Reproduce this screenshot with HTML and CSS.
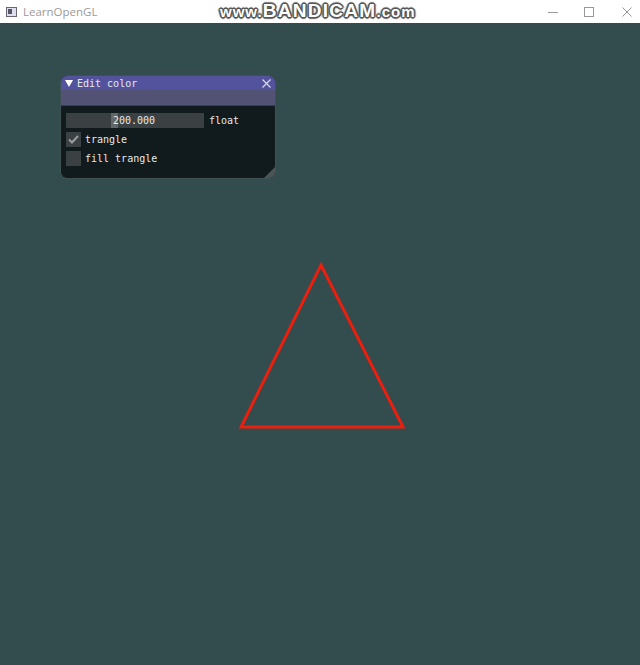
FILE: index.html
```html
<!DOCTYPE html>
<html>
<head>
<meta charset="utf-8">
<link rel="stylesheet" href="styles.css">
</head>
<body>
<div class="titlebar">
  <div class="app">
    <svg class="appicon" width="11" height="10" viewBox="0 0 11 10"><rect x="0.5" y="0.5" width="10" height="9" fill="#dde" stroke="#667"/><rect x="2" y="2" width="4" height="5" fill="#556"/></svg>
    <span class="apptitle">LearnOpenGL</span>
  </div>
  <div class="watermark"><span class="small">www.</span>BANDICAM<span class="small">.com</span></div>
  <div class="controls">
    <span class="ctl"><svg width="10" height="10" viewBox="0 0 10 10"><path d="M0 5.5H10" stroke="#999" stroke-width="1"/></svg></span>
    <span class="ctl"><svg width="10" height="10" viewBox="0 0 10 10"><rect x="0.5" y="0.5" width="9" height="9" fill="none" stroke="#999"/></svg></span>
    <span class="ctl ctl-close"><svg width="10" height="10" viewBox="0 0 10 10"><path d="M0.5 0.5L9.5 9.5M9.5 0.5L0.5 9.5" stroke="#999"/></svg></span>
  </div>
</div>
<div class="viewport">
  <svg class="scene" width="640" height="642" viewBox="0 23 640 642">
    <polygon points="241,427 403,427 321,265" fill="none" stroke="#ec1e0e" stroke-width="3" stroke-linejoin="miter"/>
  </svg>
  <div class="imwin">
    <div class="imtitle">
      <svg class="arrow" width="8" height="7" viewBox="0 0 8 7"><path d="M0 0H8L4 7Z" fill="#ffffff"/></svg>
      <span class="imtitletext">Edit color</span>
      <svg class="close" width="9" height="9" viewBox="0 0 9 9"><path d="M0.5 0.5L8.5 8.5M8.5 0.5L0.5 8.5" stroke="#d8d8e8" stroke-width="1.2"/></svg>
    </div>
    <div class="imband"></div>
    <div class="imbody">
      <div class="row">
        <div class="slider"><div class="grab"></div><span class="val">200.000</span></div>
        <span class="label">float</span>
      </div>
      <div class="row">
        <div class="check"><svg width="15" height="15" viewBox="0 0 15 15"><path d="M3 7.5L6 10.5L12 4" fill="none" stroke="#9a9ea0" stroke-width="2"/></svg></div>
        <span class="label">trangle</span>
      </div>
      <div class="row">
        <div class="check"></div>
        <span class="label">fill trangle</span>
      </div>
    </div>
    <div class="grip"></div>
  </div>
</div>
</body>
</html>
```
FILE: styles.css
```css
html, body {
  margin: 0;
  padding: 0;
  background: #334c4d;
  width: 640px;
  height: 665px;
  overflow: hidden;
}
.titlebar {
  height: 23px;
  background: #ffffff;
  display: flex;
  align-items: center;
  position: relative;
  font-family: "Open Sans", "Liberation Sans", sans-serif;
}
.app {
  display: flex;
  align-items: center;
  padding-left: 6px;
  width: 200px;
}
.appicon { margin-right: 6px; }
.apptitle {
  font-size: 11.5px;
  color: #9a9a9a;
}
.watermark {
  position: absolute;
  left: 220px;
  top: 1px;
  font-family: "Liberation Sans", sans-serif;
  font-weight: bold;
  font-size: 19px;
  letter-spacing: 1.3px;
  color: #ffffff;
  text-shadow: -1px -1px 0 #555, 1px -1px 0 #555, -1px 1px 0 #555, 1px 1px 0 #555, 0 2px 1px #666, 0 -2px 1px #777, 2px 0 1px #777, -2px 0 1px #777;
  line-height: 20px;
}
.watermark .small { font-size: 15px; letter-spacing: 1px; }
.controls {
  margin-left: auto;
  display: flex;
  align-items: center;
}
.ctl {
  width: 36px;
  display: flex;
  justify-content: center;
  align-items: center;
  height: 23px;
}
.ctl-close {
  width: 26px;
  margin-left: 7px;
}
.viewport {
  position: relative;
  height: 642px;
}
.scene {
  display: block;
}
.imwin {
  position: absolute;
  left: 61px;
  top: 53px;
  width: 214px;
  height: 102px;
  border-radius: 6px;
  overflow: hidden;
  background: #111a1c;
  font-family: "DejaVu Sans Mono", monospace;
  font-size: 10px;
  color: #e8e8e8;
  box-shadow: 0 0 0 0.5px #4a5860;
}
.imtitle {
  height: 14px;
  background: #53529d;
  display: flex;
  align-items: center;
  position: relative;
}
.arrow {
  margin-left: 4px;
  margin-right: 4px;
}
.close {
  position: absolute;
  right: 4px;
  top: 3px;
}
.imband {
  height: 15px;
  background: #525274;
  border-bottom: 1px solid #3c3c58;
}
.imbody {
  padding: 7px 5px 0 5px;
  display: flex;
  flex-direction: column;
  gap: 4px;
}
.row {
  display: flex;
  align-items: center;
  height: 15px;
}
.slider {
  width: 138px;
  height: 15px;
  background: #3b4143;
  position: relative;
  display: flex;
  justify-content: center;
  align-items: center;
}
.grab {
  position: absolute;
  left: 45px;
  top: 0;
  width: 7px;
  height: 15px;
  background: #62686a;
}
.val {
  position: relative;
  left: -1px;
}
.slider + .label { margin-left: 5px; }
.check {
  width: 15px;
  height: 15px;
  background: #3b4143;
  margin-right: 4px;
}
.check svg { display: block; }
.grip {
  position: absolute;
  right: 0;
  bottom: 0;
  width: 0;
  height: 0;
  border-left: 11px solid transparent;
  border-bottom: 11px solid #4c5456;
}
```
